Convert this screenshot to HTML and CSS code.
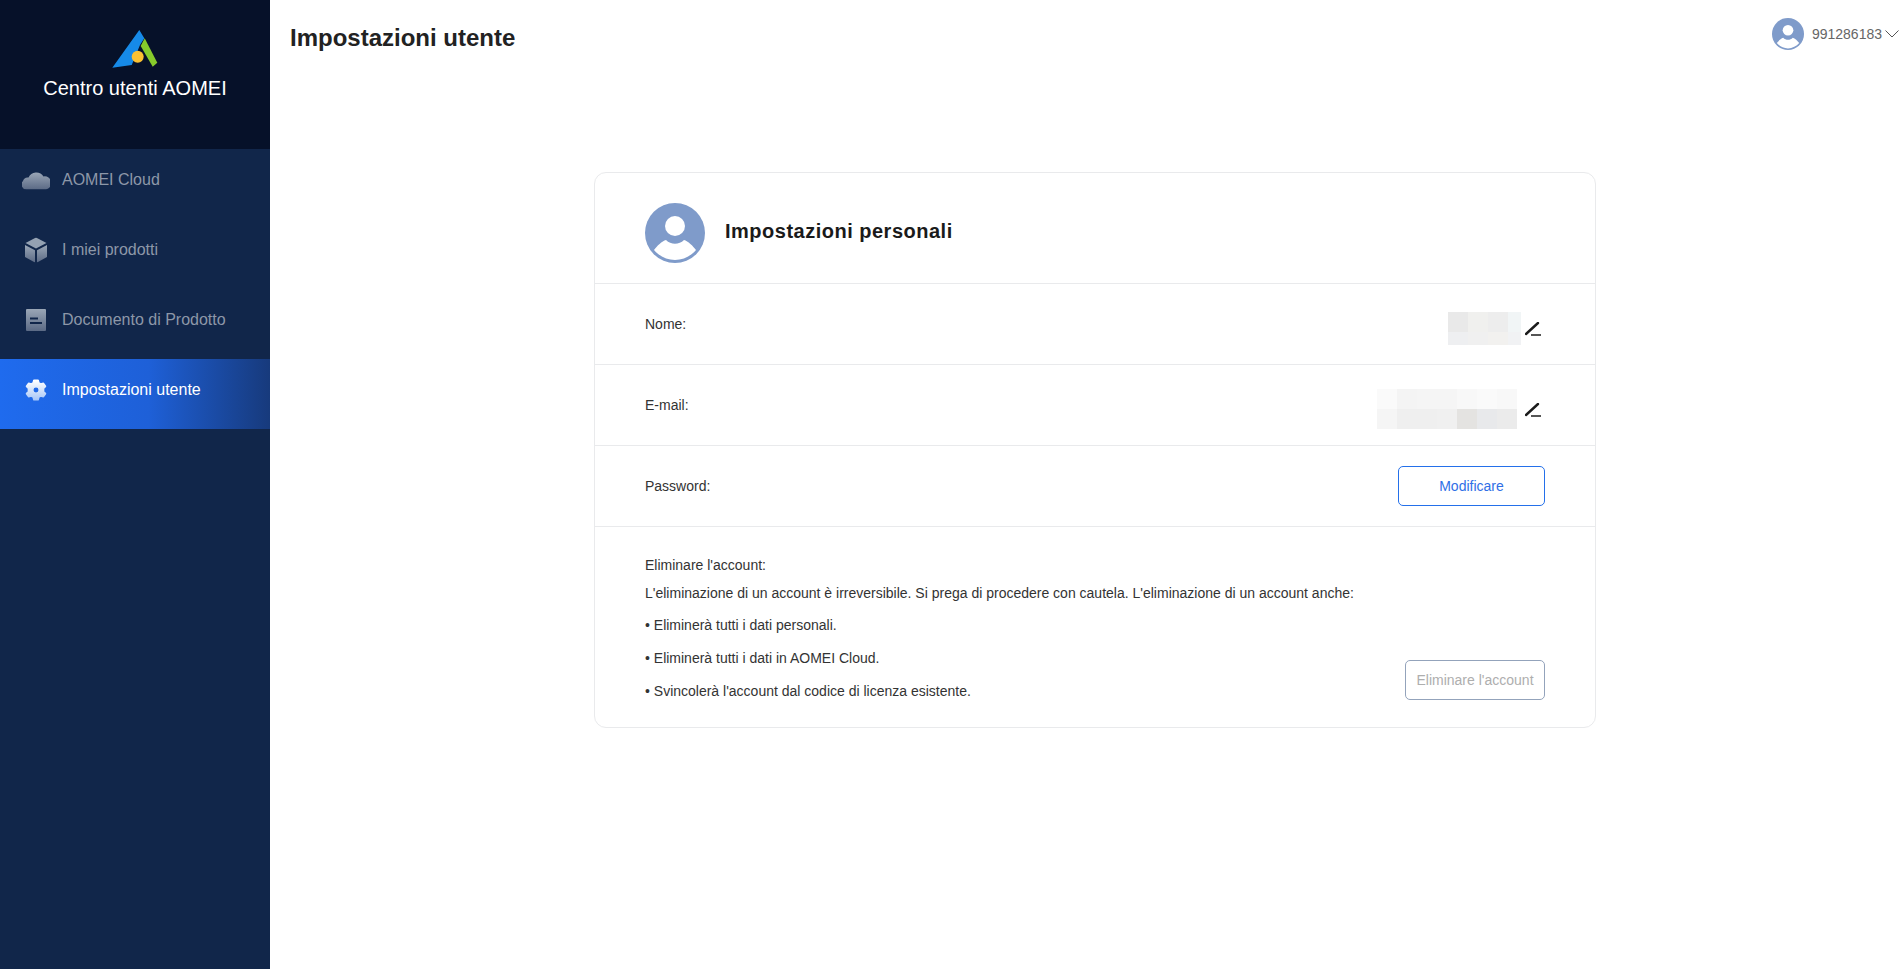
FILE: index.html
```html
<!DOCTYPE html>
<html lang="it">
<head>
<meta charset="utf-8">
<title>Impostazioni utente</title>
<link rel="stylesheet" href="styles.css">
</head>
<body>
<svg class="defs" width="0" height="0" aria-hidden="true">
  <defs>
    <linearGradient id="navg" x1="0" y1="0" x2="0" y2="1"><stop offset="0" stop-color="#9aa6b6"/><stop offset="1" stop-color="#5b6a85"/></linearGradient>
    <linearGradient id="gearg" x1="0" y1="0" x2="0" y2="1"><stop offset="0" stop-color="#ffffff"/><stop offset="1" stop-color="#a9c8f8"/></linearGradient>
  </defs>
</svg>
<div class="app">
  <aside class="sidebar">
    <div class="brand">
      <svg class="logo" width="46" height="38" viewBox="0 0 46 38">
        <path d="M0.300 37.700 L27.300 0 L32.300 8.300 L28 15 L19.700 35 Z" fill="#168ae8"/>
        <path d="M32.700 8.300 L45.300 32.700 L40.700 36.700 L28.700 16 Z" fill="#86cb2b"/>
        <circle cx="25.700" cy="26.700" r="6" fill="#fbc131"/>
      </svg>
      <div class="brand-name">Centro utenti AOMEI</div>
    </div>
    <nav class="nav">
      <a class="nav-item">
        <svg class="nav-icon" width="28" height="19" viewBox="0 0 28 19"><path d="M5 19 A5 5 0 0 1 1 10.500 A5 5 0 0 1 6.500 7 A8.500 8.500 0 0 1 21.500 6 A6.500 6.500 0 0 1 24 19 Z" fill="url(#navg)"/></svg>
        <span>AOMEI Cloud</span>
      </a>
      <a class="nav-item">
        <svg class="nav-icon" width="22" height="25" viewBox="0 0 22 25"><path d="M11 0 L21.500 5.500 L11 11 L0.500 5.500 Z" fill="#94a1b2"/><path d="M0 7.500 L10 12.800 L10 25 L0 19.500 Z" fill="url(#navg)"/><path d="M22 7.500 L12 12.800 L12 25 L22 19.500 Z" fill="url(#navg)"/></svg>
        <span>I miei prodotti</span>
      </a>
      <a class="nav-item">
        <svg class="nav-icon" width="20" height="22" viewBox="0 0 20 22"><path fill-rule="evenodd" d="M1 0 H19 A1 1 0 0 1 20 1 V21 A1 1 0 0 1 19 22 H1 A1 1 0 0 1 0 21 V1 A1 1 0 0 1 1 0 Z M4 8.500 V10.500 H12 V8.500 Z M4 13 V15 H16 V13 Z" fill="url(#navg)"/></svg>
        <span>Documento di Prodotto</span>
      </a>
      <a class="nav-item active">
        <svg class="nav-icon" width="22" height="22" viewBox="0 0 24 24"><path fill-rule="evenodd" d="M9.800 1.500 H14.200 L15 4.300 L17.100 5.500 L20 4.800 L22.200 8 L20.100 10.200 V13.800 L22.200 16 L20 19.200 L17.100 18.500 L15 19.700 L14.200 22.500 H9.800 L9 19.700 L6.900 18.500 L4 19.200 L1.800 16 L3.900 13.800 V10.200 L1.800 8 L4 4.800 L6.900 5.500 L9 4.300 Z M12 8.300 A3.700 3.700 0 1 0 12 15.700 A3.700 3.700 0 1 0 12 8.300 Z" fill="url(#gearg)" stroke="url(#gearg)" stroke-width="2" stroke-linejoin="round"/></svg>
        <span>Impostazioni utente</span>
      </a>
    </nav>
  </aside>
  <main class="main">
    <header class="topbar">
      <h1 class="page-title">Impostazioni utente</h1>
      <div class="user">
        <svg class="avatar-small" width="32" height="32" viewBox="0 0 60 60"><circle cx="30" cy="30" r="30" fill="#7f9bca"/><circle cx="30" cy="23" r="10" fill="#fff"/><path d="M9 47 C12 43 17 38 21 37 C26 42 34 42 39 37 C43 38 48 43 51 47 C46 53 38 57 30 57 C22 57 14 53 9 47 Z" fill="#fff"/></svg>
        <span class="user-id">991286183</span>
        <svg class="chevron" width="14" height="8" viewBox="0 0 14 8"><path d="M0.500 0.500 L7 7 L13.500 0.500" fill="none" stroke="#555" stroke-width="1"/></svg>
      </div>
    </header>
    <section class="card">
      <div class="card-head">
        <svg width="60" height="60" viewBox="0 0 60 60"><circle cx="30" cy="30" r="30" fill="#7f9bca"/><circle cx="30" cy="23" r="10" fill="#fff"/><path d="M9 47 C12 43 17 38 21 37 C26 42 34 42 39 37 C43 38 48 43 51 47 C46 53 38 57 30 57 C22 57 14 53 9 47 Z" fill="#fff"/></svg>
        <h2 class="card-title">Impostazioni personali</h2>
      </div>
      <div class="row">
        <span>Nome:</span>
        <div class="value">
          <svg class="mosaic" width="73" height="33" viewBox="0 0 73 33" shape-rendering="crispEdges"><rect width="20" height="20" fill="#e9e9e9"/><rect x="20" width="20" height="20" fill="#f0f0ee"/><rect x="40" width="20" height="20" fill="#ededed"/><rect x="60" width="13" height="20" fill="#f1f5f6"/><rect y="20" width="20" height="13" fill="#eeeff1"/><rect x="20" y="20" width="20" height="13" fill="#f0f0f0"/><rect x="40" y="20" width="20" height="13" fill="#f2f1ef"/><rect x="60" y="20" width="13" height="13" fill="#f1f2f4"/></svg>
          <svg class="pen" width="16" height="14" viewBox="0 0 16 14"><path d="M1 12 L13 1" stroke="#1c1c1c" stroke-width="2.400" stroke-linecap="round" fill="none"/><path d="M6 13 H16" stroke="#1c1c1c" stroke-width="1.500" fill="none"/></svg>
        </div>
      </div>
      <div class="row">
        <span>E-mail:</span>
        <div class="value">
          <svg class="mosaic mosaic-wide" width="140" height="40" viewBox="0 0 140 40" shape-rendering="crispEdges"><rect width="20" height="20" fill="#fafafa"/><rect x="20" width="20" height="20" fill="#f4f4f4"/><rect x="40" width="20" height="20" fill="#f5f5f5"/><rect x="60" width="20" height="20" fill="#f5f5f5"/><rect x="80" width="20" height="20" fill="#f8f8f8"/><rect x="100" width="20" height="20" fill="#fafafa"/><rect x="120" width="20" height="20" fill="#f8f8f8"/><rect y="20" width="20" height="20" fill="#f5f5f5"/><rect x="20" y="20" width="20" height="20" fill="#efefef"/><rect x="40" y="20" width="20" height="20" fill="#efefef"/><rect x="60" y="20" width="20" height="20" fill="#f0f0f0"/><rect x="80" y="20" width="20" height="20" fill="#e4e3e1"/><rect x="100" y="20" width="20" height="20" fill="#e8e9eb"/><rect x="120" y="20" width="20" height="20" fill="#ebebeb"/></svg>
          <svg class="pen" width="16" height="14" viewBox="0 0 16 14"><path d="M1 12 L13 1" stroke="#1c1c1c" stroke-width="2.400" stroke-linecap="round" fill="none"/><path d="M6 13 H16" stroke="#1c1c1c" stroke-width="1.500" fill="none"/></svg>
        </div>
      </div>
      <div class="row">
        <span>Password:</span>
        <button class="btn btn-primary" type="button">Modificare</button>
      </div>
      <div class="delete">
        <div class="delete-text">
          <p class="delete-title">Eliminare l'account:</p>
          <p class="delete-intro">L'eliminazione di un account è irreversibile. Si prega di procedere con cautela. L'eliminazione di un account anche:</p>
          <p class="bullet">• Eliminerà tutti i dati personali.</p>
          <p class="bullet">• Eliminerà tutti i dati in AOMEI Cloud.</p>
          <p class="bullet">• Svincolerà l'account dal codice di licenza esistente.</p>
        </div>
        <button class="btn btn-muted" type="button">Eliminare l'account</button>
      </div>
    </section>
  </main>
</div>
</body>
</html>
```

FILE: styles.css
```css
* { box-sizing: border-box; }
html, body { margin: 0; height: 100%; overflow: hidden; }
body { font-family: "Liberation Sans", Arial, sans-serif; background: #fff; color: #222; }
.defs { position: absolute; }
.app { display: flex; height: 969px; }

.sidebar { width: 270px; flex: none; background: #11264a; display: flex; flex-direction: column; }
.brand { height: 149px; background: #061129; display: flex; flex-direction: column; align-items: center; padding-top: 30px; }
.logo { display: block; }
.brand-name { margin-top: 8px; font-size: 20px; line-height: 24px; color: #fff; }
.nav { display: flex; flex-direction: column; }
.nav-item { height: 70px; display: flex; align-items: center; color: #8d97a8; font-size: 16px; position: relative; padding: 0 0 8px 62px; }
.nav-icon { position: absolute; left: 36px; top: 31px; transform: translate(-50%, -50%); }
.nav-item.active { color: #fff; background: linear-gradient(90deg, #1f6bee 0%, #1e60d8 55%, #173a7c 100%); }

.main { flex: 1; min-width: 0; display: flex; flex-direction: column; }
.topbar { height: 172px; display: flex; justify-content: space-between; align-items: flex-start; flex: none; padding: 18px 4px 0 20px; }
.page-title { margin: 0; font-size: 24px; line-height: 40px; font-weight: 700; color: #222; }
.user { display: flex; align-items: center; height: 32px; color: #666; font-size: 14px; }
.avatar-small { margin-right: 8px; }
.chevron { margin-left: 3px; }

.card { width: 1002px; height: 556px; margin-left: 324px; border: 1px solid #e9eaec; border-radius: 12px; display: flex; flex-direction: column; font-size: 14px; color: #333; }
.card-head { height: 111px; padding: 30px 50px 0; display: flex; align-items: flex-start; border-bottom: 1px solid #e9eaec; flex: none; }
.card-title { margin: -2px 0 0 20px; font-size: 20px; line-height: 60px; font-weight: 700; color: #1a1a1a; letter-spacing: 0.5px; }
.row { height: 81px; flex: none; border-bottom: 1px solid #e9eaec; padding: 0 50px; display: flex; align-items: center; justify-content: space-between; }
.value { display: flex; align-items: center; margin-top: 8px; padding-right: 4px; }
.mosaic { display: block; }
.mosaic-wide { margin-right: 4px; }
.pen { margin: 2px 0 0 4px; flex: none; }
.btn { height: 40px; padding: 0; border-radius: 5px; background: #fff; font-family: inherit; font-size: 14px; }
.btn-primary { width: 147px; border: 1px solid #2470ea; color: #2f6fe6; }
.btn-muted { width: 140px; border: 1px solid #93a3bb; color: #aeaeae; }
.delete { flex: 1; display: flex; justify-content: space-between; align-items: flex-end; padding: 0 50px 27px; }
.delete-text { align-self: flex-start; padding-top: 30px; }
.delete-text p { margin: 0; line-height: 17px; }
.delete-intro { margin-top: 11px !important; }
.delete-intro + .bullet { margin-top: 15px !important; }
.bullet { margin-top: 16px !important; }
```
